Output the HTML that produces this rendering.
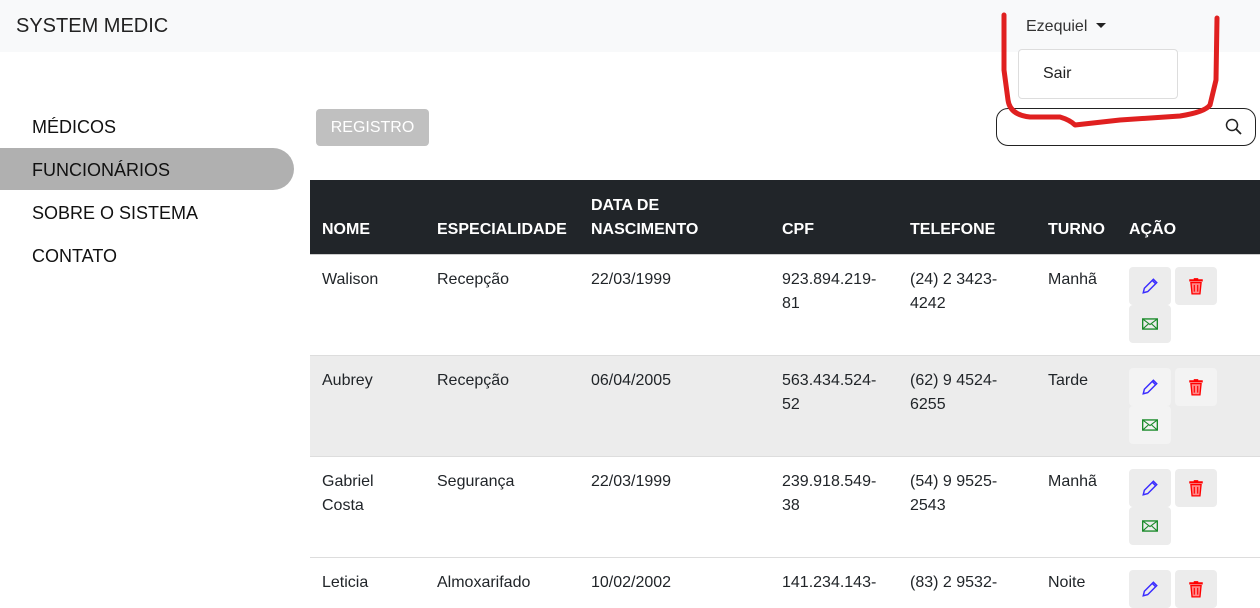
<!DOCTYPE html>
<html><head><style>
body{margin:0;width:1260px;height:590px;overflow:hidden;background:#fff;font-family:"Liberation Sans",sans-serif;color:#212529;position:relative}
.a{position:absolute}
.nav{left:0;top:0;width:1260px;height:52px;background:#f8f9fa}
.side{font-size:18px;color:#111;left:32px}
.c{position:absolute;font-size:16px;line-height:24px}
.h{color:#fff;font-weight:bold}
.btn{position:absolute;width:42px;height:38px;background:#ececec;border-radius:4px;display:flex;align-items:center;justify-content:center}
.g .btn{background:#f3f3f3}
</style></head><body>
<div class="a nav"></div>
<div class="a" style="left:16px;top:15px;font-size:20px;color:#222">SYSTEM MEDIC</div>
<div class="a" style="left:1026px;top:18px;font-size:16px;color:#333">Ezequiel <span style="display:inline-block;width:0;height:0;border-left:5px solid transparent;border-right:5px solid transparent;border-top:5px solid #222;vertical-align:3px;margin-left:4px"></span></div>
<div class="a" style="left:1018px;top:49px;width:158px;height:48px;border:1px solid #ddd;border-radius:4px;background:#fff"></div>
<div class="a" style="left:1043px;top:65px;font-size:16px;color:#222">Sair</div>

<div class="a" style="left:0;top:148px;width:294px;height:42px;background:#b0b0b0;border-radius:0 21px 21px 0"></div>
<div class="a side" style="top:117px">MÉDICOS</div>
<div class="a side" style="top:160px">FUNCIONÁRIOS</div>
<div class="a side" style="top:203px">SOBRE O SISTEMA</div>
<div class="a side" style="top:246px">CONTATO</div>

<div class="a" style="left:316px;top:109px;width:113px;height:37px;background:#c0c0c0;border-radius:4px;color:#fff;font-size:16px;line-height:38px;text-align:center">REGISTRO</div>
<div class="a" style="left:996px;top:108px;width:258px;height:36px;border:1px solid #222;border-radius:12px"></div>
<svg class="a" style="left:1225px;top:118px" width="18" height="18" viewBox="0 0 18 18"><circle cx="7" cy="7" r="5.5" fill="none" stroke="#222" stroke-width="1.5"/><path d="M11 11l5 5" stroke="#222" stroke-width="1.8"/></svg>

<div class="a" style="left:310px;top:180px;width:950px;height:74px;background:#212529"></div>
<div class="a" style="left:310px;top:355px;width:950px;height:101px;background:#ececec"></div>
<div class="a" style="left:310px;top:254px;width:950px;height:1px;background:#ccc"></div>
<div class="a" style="left:310px;top:355px;width:950px;height:1px;background:#ddd"></div>
<div class="a" style="left:310px;top:456px;width:950px;height:1px;background:#ddd"></div>
<div class="a" style="left:310px;top:557px;width:950px;height:1px;background:#ddd"></div>

<div class="c h" style="left:322px;top:218px">NOME</div>
<div class="c h" style="left:437px;top:218px">ESPECIALIDADE</div>
<div class="c h" style="left:591px;top:194px">DATA DE<br>NASCIMENTO</div>
<div class="c h" style="left:782px;top:218px">CPF</div>
<div class="c h" style="left:910px;top:218px">TELEFONE</div>
<div class="c h" style="left:1048px;top:218px">TURNO</div>
<div class="c h" style="left:1129px;top:218px">AÇÃO</div>

<div class="c" style="left:322px;top:268px">Walison</div><div class="c" style="left:437px;top:268px">Recepção</div><div class="c" style="left:591px;top:268px">22/03/1999</div><div class="c" style="left:782px;top:268px">923.894.219-<br>81</div><div class="c" style="left:910px;top:268px">(24) 2 3423-<br>4242</div><div class="c" style="left:1048px;top:268px">Manhã</div>
<div class="c" style="left:322px;top:369px">Aubrey</div><div class="c" style="left:437px;top:369px">Recepção</div><div class="c" style="left:591px;top:369px">06/04/2005</div><div class="c" style="left:782px;top:369px">563.434.524-<br>52</div><div class="c" style="left:910px;top:369px">(62) 9 4524-<br>6255</div><div class="c" style="left:1048px;top:369px">Tarde</div>
<div class="c" style="left:322px;top:470px">Gabriel<br>Costa</div><div class="c" style="left:437px;top:470px">Segurança</div><div class="c" style="left:591px;top:470px">22/03/1999</div><div class="c" style="left:782px;top:470px">239.918.549-<br>38</div><div class="c" style="left:910px;top:470px">(54) 9 9525-<br>2543</div><div class="c" style="left:1048px;top:470px">Manhã</div>
<div class="c" style="left:322px;top:571px">Leticia</div><div class="c" style="left:437px;top:571px">Almoxarifado</div><div class="c" style="left:591px;top:571px">10/02/2002</div><div class="c" style="left:782px;top:571px">141.234.143-</div><div class="c" style="left:910px;top:571px">(83) 2 9532-</div><div class="c" style="left:1048px;top:571px">Noite</div>

<svg width="0" height="0" style="position:absolute"><defs>
<symbol id="pen" viewBox="0 0 16 16"><path d="M11 2l3 3-8 8-4 1 1-4z M10 3l3 3" fill="none" stroke="#3a2cff" stroke-width="1.3"/></symbol>
<symbol id="trash" viewBox="0 0 16 16"><rect x="2" y="2" width="12" height="2" fill="#f00"/><rect x="6" y="1" width="4" height="2" fill="#f00"/><path d="M3.5 5h9l-1 10h-7z" fill="#f88" stroke="#f00" stroke-width="1.2"/><path d="M6.5 7v6M9.5 7v6" stroke="#f00"/></symbol>
<symbol id="mail" viewBox="0 0 16 16"><rect x="1.5" y="3.5" width="13" height="9" fill="none" stroke="#1a8a2a" stroke-width="1.2"/><path d="M1.5 3.5l6.5 5 6.5-5M1.5 12.5l5-4.5M14.5 12.5l-5-4.5" fill="none" stroke="#1a8a2a" stroke-width="1"/></symbol>
</defs></svg>
<div class="btn" style="left:1129px;top:267px"><svg width="18" height="18"><use href="#pen"/></svg></div>
<div class="btn" style="left:1175px;top:267px"><svg width="18" height="18"><use href="#trash"/></svg></div>
<div class="btn" style="left:1129px;top:305px"><svg width="18" height="18"><use href="#mail"/></svg></div>
<div class="g">
<div class="btn" style="left:1129px;top:368px"><svg width="18" height="18"><use href="#pen"/></svg></div>
<div class="btn" style="left:1175px;top:368px"><svg width="18" height="18"><use href="#trash"/></svg></div>
<div class="btn" style="left:1129px;top:406px"><svg width="18" height="18"><use href="#mail"/></svg></div>
</div>
<div class="btn" style="left:1129px;top:469px"><svg width="18" height="18"><use href="#pen"/></svg></div>
<div class="btn" style="left:1175px;top:469px"><svg width="18" height="18"><use href="#trash"/></svg></div>
<div class="btn" style="left:1129px;top:507px"><svg width="18" height="18"><use href="#mail"/></svg></div>
<div class="btn" style="left:1129px;top:570px"><svg width="18" height="18"><use href="#pen"/></svg></div>
<div class="btn" style="left:1175px;top:570px"><svg width="18" height="18"><use href="#trash"/></svg></div>

<svg class="a" style="left:0;top:0" width="1260" height="590"><path d="M1004 15 L1004 70 Q1006 85 1008 100 Q1010 115 1030 117 L1060 117 Q1070 120 1075 125 L1120 120 L1180 116 Q1205 112 1210 105 L1216 80 L1217 18" fill="none" stroke="#e02020" stroke-width="5" stroke-linecap="round" stroke-linejoin="round"/></svg>
</body></html>
